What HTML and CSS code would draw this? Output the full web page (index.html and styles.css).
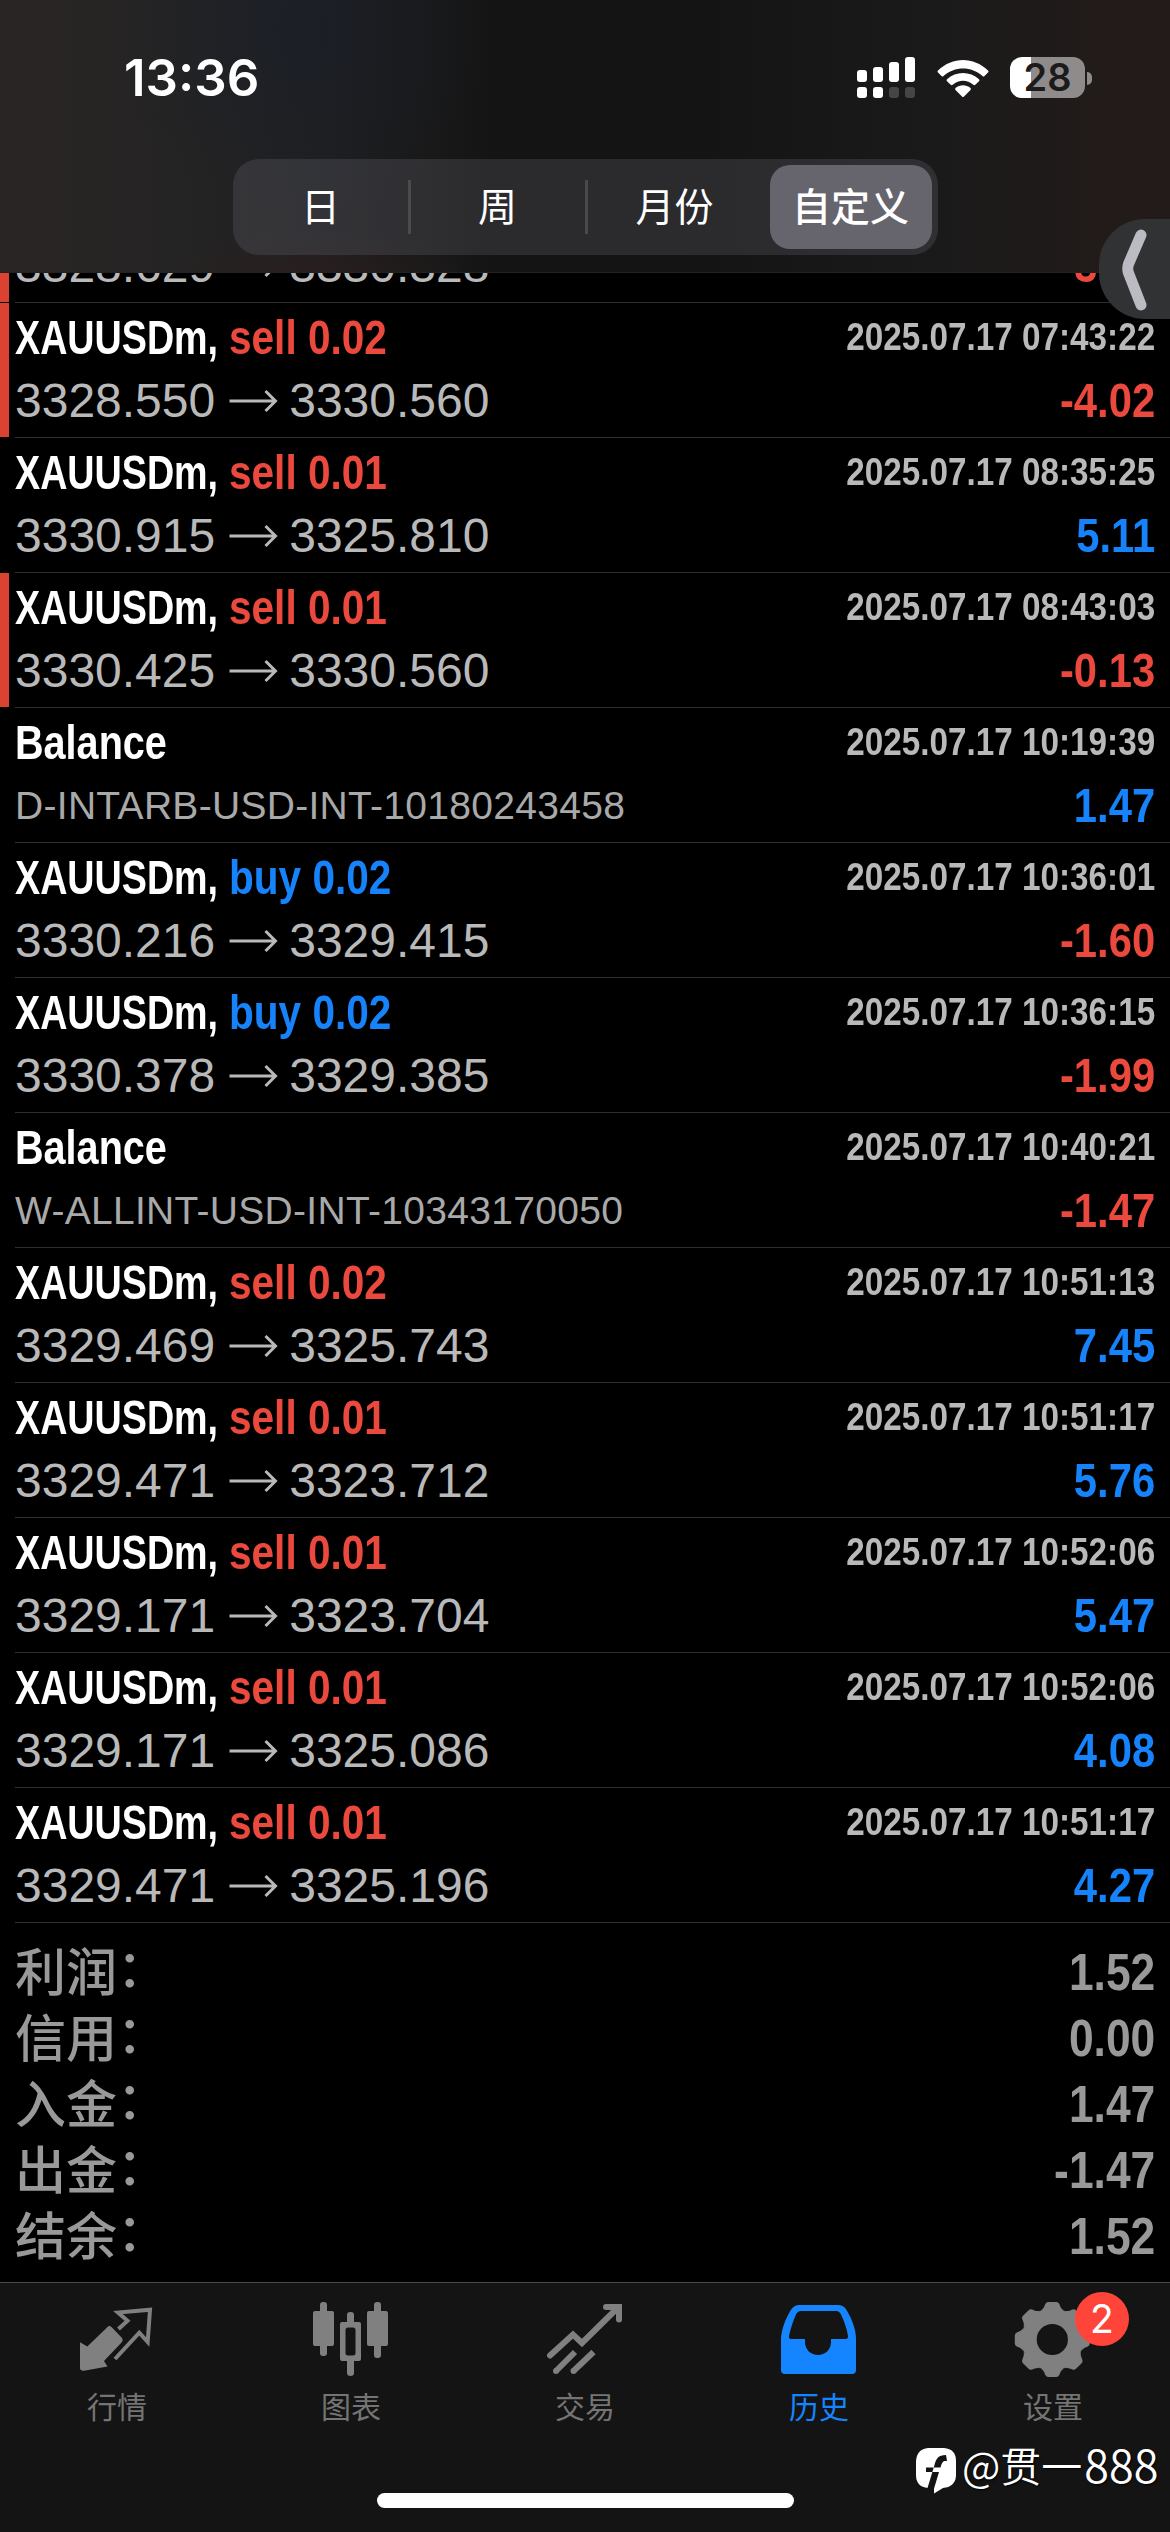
FILE: index.html
```html
<!DOCTYPE html>
<html lang="zh-CN">
<head>
<meta charset="utf-8">
<title>历史</title>
<link rel="stylesheet" href="styles.css">
</head>
<body>
<svg class="defs" width="0" height="0">
  <symbol id="arrow" viewBox="0 0 73 24"><path d="M14 12H58M50 2L60 12L50 22" fill="none" stroke="#b9b9b9" stroke-width="3"/></symbol>
</svg>
<div class="screen">
  <header class="header">
    <div class="status">
      <span class="time">13:36</span>
      <div class="status-icons">
        <svg width="60" height="42" viewBox="0 0 60 42" fill="#fff">
          <rect x="0" y="13" width="10" height="12" rx="3"/><rect x="16" y="10" width="10" height="15" rx="3"/><rect x="32" y="5" width="10" height="20" rx="3"/><rect x="48" y="0" width="10" height="25" rx="3"/>
          <rect x="0" y="30" width="10" height="11" rx="3"/><rect x="16" y="30" width="10" height="11" rx="3"/>
          <g fill="#454545"><rect x="32" y="30" width="10" height="11" rx="3"/><rect x="48" y="30" width="10" height="11" rx="3"/></g>
        </svg>
        <svg class="wifi" width="52" height="42" viewBox="0 0 52 42" fill="#fff">
          <path d="M1 12.500Q0 13.500 1 14.600L4.500 18Q5.500 19 6.500 18C17.500 8 34.500 8 45.500 18Q46.500 19 47.500 18L51 14.600Q52 13.500 51 12.500C36.500-1.500 15.500-1.500 1 12.500Z"/>
          <path d="M10 21.200Q9 22.200 10 23.300L13.700 26.800Q14.700 27.700 15.700 26.800C22 21.500 30 21.500 36.300 26.800Q37.300 27.700 38.300 26.800L42 23.300Q43 22.200 42 21.200C33 13 19 13 10 21.200Z"/>
          <path d="M18.500 30Q17.700 31 18.500 32L25 38.500Q26 39.500 27 38.500L33.500 32Q34.300 31 33.500 30C29 26.200 23 26.200 18.500 30Z"/>
        </svg>
        <div class="battery"><span>28</span></div>
        <i class="nub"></i>
      </div>
    </div>
    <nav class="segments">
      <span class="seg">日</span><span class="seg line">周</span><span class="seg line">月份</span><span class="seg on">自定义</span>
    </nav>
  </header>

  <main class="list">
    <div class="row loss cut"><div class="title"></div><time></time><div class="price">3328.629<svg><use href="#arrow"/></svg>3330.328</div><b class="pl neg">-3.40</b></div>
    <div class="row loss"><div class="title"><b class="sym">XAUUSDm,</b><b class="side sell">sell 0.02</b></div><time>2025.07.17 07:43:22</time><div class="price">3328.550<svg><use href="#arrow"/></svg>3330.560</div><b class="pl neg">-4.02</b></div>
    <div class="row"><div class="title"><b class="sym">XAUUSDm,</b><b class="side sell">sell 0.01</b></div><time>2025.07.17 08:35:25</time><div class="price">3330.915<svg><use href="#arrow"/></svg>3325.810</div><b class="pl">5.11</b></div>
    <div class="row loss"><div class="title"><b class="sym">XAUUSDm,</b><b class="side sell">sell 0.01</b></div><time>2025.07.17 08:43:03</time><div class="price">3330.425<svg><use href="#arrow"/></svg>3330.560</div><b class="pl neg">-0.13</b></div>
    <div class="row"><div class="title"><b class="bal">Balance</b></div><time>2025.07.17 10:19:39</time><div class="note">D-INTARB-USD-INT-10180243458</div><b class="pl">1.47</b></div>
    <div class="row"><div class="title"><b class="sym">XAUUSDm,</b><b class="side buy">buy 0.02</b></div><time>2025.07.17 10:36:01</time><div class="price">3330.216<svg><use href="#arrow"/></svg>3329.415</div><b class="pl neg">-1.60</b></div>
    <div class="row"><div class="title"><b class="sym">XAUUSDm,</b><b class="side buy">buy 0.02</b></div><time>2025.07.17 10:36:15</time><div class="price">3330.378<svg><use href="#arrow"/></svg>3329.385</div><b class="pl neg">-1.99</b></div>
    <div class="row"><div class="title"><b class="bal">Balance</b></div><time>2025.07.17 10:40:21</time><div class="note">W-ALLINT-USD-INT-10343170050</div><b class="pl neg">-1.47</b></div>
    <div class="row"><div class="title"><b class="sym">XAUUSDm,</b><b class="side sell">sell 0.02</b></div><time>2025.07.17 10:51:13</time><div class="price">3329.469<svg><use href="#arrow"/></svg>3325.743</div><b class="pl">7.45</b></div>
    <div class="row"><div class="title"><b class="sym">XAUUSDm,</b><b class="side sell">sell 0.01</b></div><time>2025.07.17 10:51:17</time><div class="price">3329.471<svg><use href="#arrow"/></svg>3323.712</div><b class="pl">5.76</b></div>
    <div class="row"><div class="title"><b class="sym">XAUUSDm,</b><b class="side sell">sell 0.01</b></div><time>2025.07.17 10:52:06</time><div class="price">3329.171<svg><use href="#arrow"/></svg>3323.704</div><b class="pl">5.47</b></div>
    <div class="row"><div class="title"><b class="sym">XAUUSDm,</b><b class="side sell">sell 0.01</b></div><time>2025.07.17 10:52:06</time><div class="price">3329.171<svg><use href="#arrow"/></svg>3325.086</div><b class="pl">4.08</b></div>
    <div class="row"><div class="title"><b class="sym">XAUUSDm,</b><b class="side sell">sell 0.01</b></div><time>2025.07.17 10:51:17</time><div class="price">3329.471<svg><use href="#arrow"/></svg>3325.196</div><b class="pl">4.27</b></div>
    <section class="summary">
      <div class="sum"><span>利润<i>：</i></span><b>1.52</b></div>
      <div class="sum"><span>信用<i>：</i></span><b>0.00</b></div>
      <div class="sum"><span>入金<i>：</i></span><b>1.47</b></div>
      <div class="sum"><span>出金<i>：</i></span><b>-1.47</b></div>
      <div class="sum"><span>结余<i>：</i></span><b>1.52</b></div>
    </section>
  </main>

  <footer class="tabs">
    <div class="tab">
      <svg width="90" height="90" viewBox="0 0 90 90"><path d="M46.500 33L55.500 24.700L46 16.500L78 13.700L75.700 46L67.300 36.700L43 63" fill="none" stroke="#808080" stroke-width="4"/><path d="M8 46.200L15.300 50.500L35 31.500Q37.200 29 39.500 31L50 42Q51.500 44 50 46L32 65L35.500 70.500L12 74.700Q8 75 8 72Z" fill="#808080"/></svg>
      <span>行情</span>
    </div>
    <div class="tab">
      <svg width="90" height="90" viewBox="0 0 90 90" fill="#808080"><rect x="7" y="15" width="21" height="35" rx="2"/><rect x="14" y="6" width="7" height="54" rx="3"/><rect x="61" y="15" width="21" height="35" rx="2"/><rect x="68" y="6" width="7" height="56" rx="3"/><rect x="41" y="16" width="7" height="14" rx="3"/><path d="M41 62H48V77Q48 80 44.500 80T41 77Z"/><path fill-rule="evenodd" d="M36 26H53Q55 26 55 28V63Q55 65 53 65H36Q34 65 34 63V28Q34 26 36 26ZM42 31.500Q39.500 31.500 39.500 34V57Q39.500 59.500 42 59.500H47Q49.500 59.500 49.500 57V34Q49.500 31.500 47 31.500Z"/></svg>
      <span>图表</span>
    </div>
    <div class="tab">
      <svg width="90" height="90" viewBox="0 0 90 90" fill="none" stroke="#808080" stroke-width="6"><path d="M10 59.500L33 38.500L42 47L78 11.500" stroke-linecap="round"/><path d="M66 11H79V23.500" stroke-linecap="round"/><path d="M16 75L35 56M33.500 75L53.500 56"/><g fill="#808080" stroke="none"><circle cx="16" cy="75" r="3"/><circle cx="33.500" cy="75" r="3"/></g></svg>
      <span>交易</span>
    </div>
    <div class="tab active">
      <svg width="90" height="90" viewBox="0 0 90 90" fill="#1485ff"><path fill-rule="evenodd" d="M7 42C8 30 14 18 18 12.500Q20.500 9 25 9H64Q69 9 71.500 12.500C76 19 82 32 82 42V74Q82 78 78 78H11Q7 78 7 74ZM17 43Q14.500 42.500 15 40C17 31 20 23 22 18.500Q23.500 15 27 15H62Q65.500 15 67 18.500C70 25 73 33 74 40Q74 43 72 43H57V47C56.500 54 51 59 44 59S31.500 54 31 47V43Z"/></svg>
      <span>历史</span>
    </div>
    <div class="tab">
      <svg width="90" height="90" viewBox="0 0 90 90"><defs><mask id="hole"><rect width="90" height="90" fill="#fff"/><circle cx="44.300" cy="43.500" r="15.600" fill="#000"/></mask><path id="tooth" d="M-11.500-29C-8.500-31-8-33-7-35.500Q-6-37.500-4-37.500H4Q6-37.500 7-35.500C8-33 8.500-31 11.500-29Z"/></defs><g mask="url(#hole)"><g transform="translate(44.300 43.500)" fill="#808080"><circle r="31"/><use href="#tooth"/><use href="#tooth" transform="rotate(45)"/><use href="#tooth" transform="rotate(90)"/><use href="#tooth" transform="rotate(135)"/><use href="#tooth" transform="rotate(180)"/><use href="#tooth" transform="rotate(225)"/><use href="#tooth" transform="rotate(270)"/><use href="#tooth" transform="rotate(315)"/></g></g></svg>
      <em class="badge">2</em>
      <span>设置</span>
    </div>
  </footer>
  <div class="home"></div>
  <div class="handle"><svg width="71" height="100" viewBox="0 0 71 100"><path d="M42 16L29.500 45Q28 49.500 29.500 54L42 86" fill="none" stroke="#bcbbc4" stroke-width="11" stroke-linecap="round"/></svg></div>
  <div class="credit">
    <svg width="40" height="46" viewBox="0 0 40 46"><path d="M12 0H28Q40 1 40 13V28Q39 39 27 40L18 45.500V40H12Q0 39 0 27V13Q1 1 12 0Z" fill="#fff"/><path d="M30 7C22 7 20 11 18.500 17L11.500 40L17 44L23 24H28V19.500H24.500C26 14 27 12.500 31 13ZM10 19.500H28V24H10Z" fill="#141414"/></svg>
    <span class="at">@</span><span>贯一</span><span class="num">888</span>
  </div>
</div>
</body>
</html>
```
FILE: styles.css
```css
* { box-sizing: border-box; }
body { margin: 0; background: #000; }
.defs { position: absolute; }
.screen {
  position: relative;
  width: 1170px;
  height: 2532px;
  overflow: hidden;
  display: flex;
  flex-direction: column;
  background: #000;
  color: #fff;
  font-family: "Liberation Sans", "Noto Sans CJK SC", sans-serif;
}

/* header */
.header {
  flex: none;
  height: 273px;
  display: flex;
  flex-direction: column;
  align-items: center;
  border-bottom: 1px solid #232222;
  background:
    radial-gradient(circle at 300px 30px, rgba(24, 30, 42, .6), transparent 190px),
    radial-gradient(ellipse at 320px 290px, rgba(48, 28, 28, .7), transparent 170px),
    linear-gradient(90deg, #292524 0, #252424 180px, #1f1f20 330px, #141414 500px, #141414 680px, #1b1a1a 950px, #231b1a 1130px);
}
.status {
  width: 100%;
  height: 159px;
  padding: 57px 78px 0 124px;
  display: flex;
  justify-content: space-between;
  align-items: flex-start;
}
.time { font: 600 51px/42px "Inter", sans-serif; }
.status-icons { display: flex; align-items: flex-start; }
.wifi { margin: 1px 21px 0 20px; }
.battery {
  width: 75px;
  height: 41px;
  border-radius: 12px;
  background: linear-gradient(90deg, #fff 21px, #8f8b8b 21px);
  color: #1c1b1b;
  font: 600 38px/41px "Inter", sans-serif;
  text-align: center;
}
.nub { width: 5px; height: 13px; margin: 15px 0 0 2px; border-radius: 0 5px 5px 0; background: #8f8b8b; }
.segments {
  width: 705px;
  height: 96px;
  padding: 6px;
  display: flex;
  align-items: center;
  border-radius: 26px;
  background: rgba(118, 118, 128, .24);
  font: 400 39px/54px "Noto Sans CJK SC", sans-serif;
}
.seg { display: flex; align-items: center; justify-content: center; width: 177px; height: 54px; padding-bottom: 6px; }
.seg:first-child { width: 169px; padding-right: 5px; }
.seg.line { border-left: 3px solid rgba(142, 142, 147, .3); }
.seg.on { width: 162px; height: 84px; margin-left: auto; border-radius: 20px; background: #66646c; font-weight: 500; }

/* deals */
.list { flex: none; height: 2009px; overflow: hidden; }
.row {
  position: relative;
  height: 135px;
  padding: 5px 15px 0;
  display: grid;
  grid-template-columns: 1fr auto;
  grid-template-rows: 60px 65px;
  white-space: nowrap;
}
.row::after { content: ""; position: absolute; left: 15px; right: 0; bottom: 0; height: 1px; background: #2e2e2f; }
.row.loss::before { content: ""; position: absolute; left: 0; top: 0; bottom: 1px; width: 9px; background: #dc4232; }
.cut { margin-top: -105px; }
.title { display: flex; font-size: 48px; line-height: 60px; }
.sym { width: 214px; transform: scaleX(.785); transform-origin: left; }
.side { transform: scaleX(.845); transform-origin: left; }
.bal { transform: scaleX(.825); transform-origin: left; }
.sell { color: #eb493e; }
.buy { color: #1683fb; }
.row time { font-size: 39px; font-weight: 700; line-height: 57px; color: #b9b9b9; transform: scaleX(.853); transform-origin: right; }
.price { display: flex; align-items: center; font-size: 48px; line-height: 65px; color: #b9b9b9; }
.price svg { width: 74px; height: 24px; }
.note { font-size: 39px; line-height: 65px; color: #a9a9a9; letter-spacing: .3px; }
.pl { font-size: 48px; line-height: 65px; text-align: right; color: #1683fb; transform: scaleX(.87); transform-origin: right; }
.pl.neg { color: #eb493e; }

/* totals */
.summary { padding: 16px 15px 0; color: #999; }
.sum { height: 66px; display: flex; justify-content: space-between; font-size: 51px; line-height: 68px; }
.sum span { font-family: "Noto Sans CJK SC", sans-serif; font-weight: 500; line-height: 60px; }
.sum i { display: inline-block; height: 60px; font-style: normal; transform: translateY(-4px); }
.sum b { transform: scaleX(.87); transform-origin: right; }

/* tab bar */
.tabs {
  flex: none;
  height: 250px;
  display: grid;
  grid-template-columns: repeat(5, 1fr);
  border-top: 1px solid #4a4a4a;
  background: #141414;
}
.tab { position: relative; padding-top: 13px; display: flex; flex-direction: column; align-items: center; color: #747474; }
.tab svg { flex: none; }
.tab span { font: 400 30px/38px "Noto Sans CJK SC", sans-serif; }
.tab.active { color: #1485ff; }
.badge {
  position: absolute;
  left: 139px;
  top: 9px;
  width: 54px;
  height: 54px;
  border-radius: 50%;
  background: #ff453a;
  color: #fff;
  font: 400 39px/54px "Inter", sans-serif;
  text-align: center;
}
.home { position: absolute; left: 377px; top: 2493px; width: 417px; height: 15px; border-radius: 8px; background: #fff; }
.handle { position: absolute; left: 1099px; top: 219px; width: 71px; height: 100px; border-radius: 46px 0 0 46px; background: #313234; }
.credit {
  position: absolute;
  left: 916px;
  top: 2448px;
  display: flex;
  font: 350 41px/33px "Noto Sans CJK SC", sans-serif;
  text-shadow: 1px 1px 2px #000;
  white-space: nowrap;
}
.at { margin-left: 6px; }
.num { margin-left: 2px; font-size: 45px; line-height: 32px; }
```
